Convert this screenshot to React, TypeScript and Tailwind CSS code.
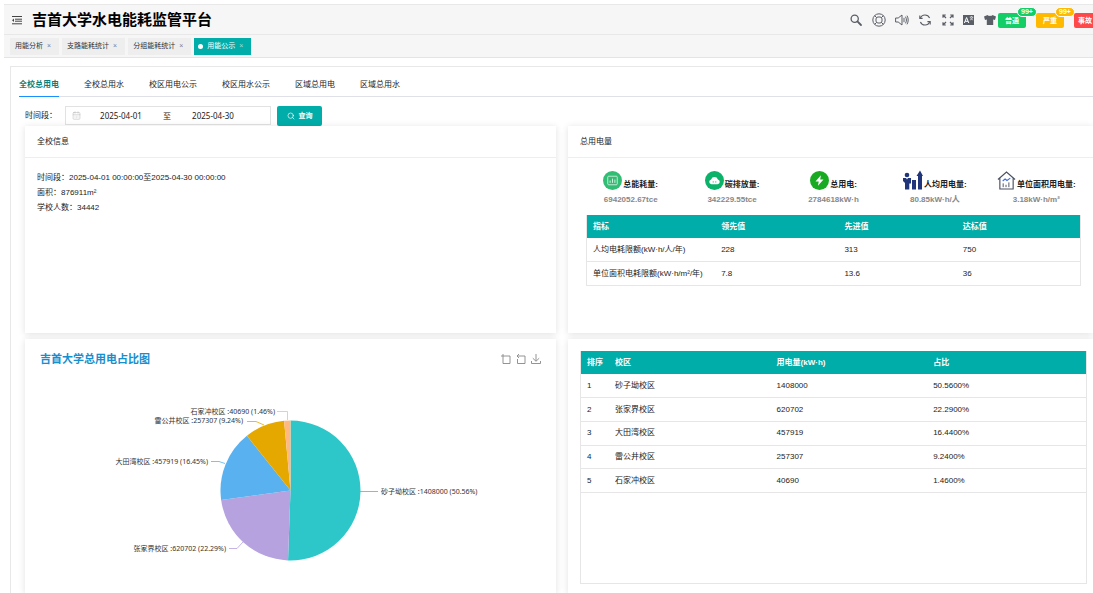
import React from "react";
import { Search, CalendarDays } from "lucide-react";

const openTabs = [
  { name: "用能分析", active: false },
  { name: "支路能耗统计", active: false },
  { name: "分组能耗统计", active: false },
  { name: "用能公示", active: true },
];

const sections = ["全校总用电", "全校总用水", "校区用电公示", "校区用水公示", "区域总用电", "区域总用水"];

const alerts = [
  { name: "普通", count: "99+", box: "bg-[#13ce66]", align: "text-center" },
  { name: "严重", count: "99+", box: "bg-[#ffba00]", align: "text-center" },
  { name: "事故", count: "", box: "bg-[#ff4949]", align: "pl-1 text-left" },
];

const quotas = [
  ["人均电耗限额(kW·h/人/年)", "228", "313", "750"],
  ["单位面积电耗限额(kW·h/m²/年)", "7.8", "13.6", "36"],
];

const campuses = [
  ["1", "砂子坳校区", "1408000", "50.5600%"],
  ["2", "张家界校区", "620702", "22.2900%"],
  ["3", "大田湾校区", "457919", "16.4400%"],
  ["4", "雷公井校区", "257307", "9.2400%"],
  ["5", "石家冲校区", "40690", "1.4600%"],
];

const CX = 265.5;
const CY = 115.5;
const R = 70;

const slices = [
  { share: 50.56, color: "#2ec7c9", label: "砂子坳校区 :1408000 (50.56%)", line: "335,116.5 353,116.5", x: 356, y: 119, anchor: "start" as const },
  { share: 22.29, color: "#b6a2de", label: "张家界校区 :620702 (22.29%)", line: "218,167 212,173.5 204,173.5", x: 201, y: 176, anchor: "end" as const },
  { share: 16.45, color: "#5ab1ef", label: "大田湾校区 :457919 (16.45%)", line: "200,88.5 194,86.5 186,86.5", x: 183, y: 89, anchor: "end" as const },
  { share: 9.24, color: "#e5a800", label: "雷公井校区 :257307 (9.24%)", line: "239,50 231,46.5 222,46.5", x: 218, y: 48, anchor: "end" as const },
  { share: 1.46, color: "#ffb980", label: "石家冲校区 :40690 (1.46%)", line: "262.5,45 262.5,36.5 252,36.5", x: 250, y: 39, anchor: "end" as const },
];

function slicePath(start: number, share: number) {
  const a = (start / 100) * Math.PI * 2;
  const b = ((start + share) / 100) * Math.PI * 2;
  const large = share > 50 ? 1 : 0;
  return `M${CX},${CY} L${CX + R * Math.sin(a)},${CY - R * Math.cos(a)} A${R},${R} 0 ${large} 1 ${CX + R * Math.sin(b)},${CY - R * Math.cos(b)} Z`;
}

function PieChart() {
  let total = 0;
  return (
    <svg viewBox="0 0 531 215" className="block w-full" role="img" aria-label="吉首大学总用电占比图">
      {slices.map((s) => {
        const d = slicePath(total, s.share);
        total += s.share;
        return (
          <g key={s.label}>
            <path d={d} fill={s.color} />
            <polyline points={s.line} fill="none" stroke={s.color} strokeWidth="0.8" />
            <text x={s.x} y={s.y} textAnchor={s.anchor} fill="#333" className="font-['Noto_Sans','Noto_Sans_CJK_SC',sans-serif] text-[7px]">
              {s.label}
            </text>
          </g>
        );
      })}
    </svg>
  );
}

function IconButton({ label, children }: { label: string; children: React.ReactNode }) {
  return (
    <button type="button" aria-label={label} className="flex size-[14px] items-center justify-center text-[#5a5e66]">
      {children}
    </button>
  );
}

function Header() {
  return (
    <header className="flex h-[31px] items-center border-y border-[#e8e8e8] pl-2">
      <button type="button" aria-label="菜单" className="text-[#444]">
        <svg viewBox="0 0 10 10" className="size-[10px]" fill="none" stroke="currentColor" strokeWidth="1">
          <path d="M0 1.500h10M3 4.200h7M3 6.200h7M0 8.800h10" />
          <path d="M2 3.500v3.400L0 5.200z" fill="currentColor" stroke="none" />
        </svg>
      </button>
      <h1 className="ml-[10px] text-[15px] leading-5 font-bold whitespace-nowrap text-black">吉首大学水电能耗监管平台</h1>
      <div className="ml-auto flex shrink-0 items-center gap-[9px]">
        <IconButton label="搜索">
          <svg viewBox="0 0 14 14" className="size-[14px]" fill="none" stroke="currentColor">
            <circle cx="5.7" cy="5.7" r="3.600" strokeWidth="1.300" />
            <path d="M8.400 8.400 12 12" strokeWidth="1.800" strokeLinecap="round" />
          </svg>
        </IconButton>
        <IconButton label="帮助">
          <svg viewBox="0 0 14 14" className="size-[14px]" fill="none" stroke="currentColor" strokeWidth="1">
            <circle cx="7" cy="7" r="6.200" />
            <rect x="4" y="4" width="6" height="6" rx="2" />
            <path d="M2.600 2.600 4.600 4.600M11.400 2.600 9.400 4.600M2.600 11.400 4.600 9.400M11.400 11.400 9.400 9.400" />
          </svg>
        </IconButton>
        <IconButton label="声音">
          <svg viewBox="0 0 14 14" className="size-[14px]" fill="none" stroke="currentColor" strokeWidth="1" strokeLinejoin="round" strokeLinecap="round">
            <path d="M1 5h2.200L7 2v10L3.200 9H1z" />
            <path d="M9 5.200v3.600M10.700 4c1 1.800 1 4.200 0 6M12.200 3c1.400 2.400 1.400 5.600 0 8" />
          </svg>
        </IconButton>
        <IconButton label="刷新">
          <svg viewBox="0 0 14 14" className="size-[14px]" fill="none" stroke="currentColor" strokeWidth="1.100">
            <path d="M2.300 5.200A5 5 0 0 1 11.600 5M11.700 8.800A5 5 0 0 1 2.400 9" />
            <path d="M1.800 2.600v2.800h2.800M12.200 11.400V8.600H9.400" />
          </svg>
        </IconButton>
        <div className="flex items-center gap-[7px]">
          <IconButton label="全屏">
            <svg viewBox="0 0 14 14" className="size-[14px]" fill="none" stroke="currentColor" strokeWidth="1.200">
              <path d="M2 4.800V2h2.800M9.200 2H12v2.800M12 9.200V12H9.200M4.800 12H2V9.200M2 2l3 3M12 2 9 5M12 12 9 9M2 12l3-3" />
            </svg>
          </IconButton>
          <IconButton label="语言">
            <svg viewBox="0 0 14 14" className="size-[14px]">
              <rect x="1" y="2" width="11" height="10" fill="currentColor" />
              <path d="M2.400 10 4.600 4.500 6.800 10M3.200 8.300h2.800" fill="none" stroke="#fff" strokeWidth="1" />
              <path d="M7.800 4h3.400M9.500 3v1M8 7c1.500-.6 2.600-1.600 2.800-3M8.300 4.300c.4 1.200 1.400 2.200 2.800 2.700" fill="none" stroke="#fff" strokeWidth="0.600" />
            </svg>
          </IconButton>
          <IconButton label="主题">
            <svg viewBox="0 0 14 14" className="size-[14px]" fill="currentColor">
              <path d="M4.600 2C5.200 3.200 8.800 3.200 9.400 2L13 3.600 12 7l-1.800-.5V12H3.800V6.500L2 7 1 3.600z" />
            </svg>
          </IconButton>
        </div>
      </div>
      <div className="-mr-[9px] ml-px flex shrink-0 items-center gap-[10px]">
        {alerts.map((a) => (
          <button key={a.name} type="button" className={`relative mt-[2px] h-[15px] w-7 rounded-xs text-[7px] leading-[15px] font-bold text-white ${a.box} ${a.align}`}>
            {a.name}
            {a.count && (
              <span className={`absolute -top-[6px] -right-[11px] h-[10px] w-5 rounded-full border border-white text-[7px] leading-2 ${a.box}`}>{a.count}</span>
            )}
          </button>
        ))}
      </div>
    </header>
  );
}

function OpenTabs() {
  return (
    <nav className="flex h-[23px] items-center gap-[3px] border-b border-[#e4e4e4] pl-[6px] text-[7px]">
      {openTabs.map((t) => (
        <a
          key={t.name}
          href="#"
          className={
            t.active
              ? "flex h-[17px] items-center gap-1 bg-[#00ada9] pr-2 pl-1 whitespace-nowrap text-white"
              : "flex h-[17px] items-center gap-1 bg-[#eee] pr-2 pl-[5px] whitespace-nowrap text-[#333]"
          }
        >
          {t.active && <span className="size-[5px] rounded-full bg-white" />}
          {t.name}
          <span className="opacity-60">×</span>
        </a>
      ))}
    </nav>
  );
}

function Filter() {
  return (
    <form className="flex h-[29px] items-center pt-2 pl-[14px]" onSubmit={(e) => e.preventDefault()}>
      <label htmlFor="start" className="w-10 whitespace-nowrap">
        时间段：
      </label>
      <div className="flex h-[19px] w-[206px] items-center border border-[#e2e2e2] bg-white font-['Noto_Sans','Noto_Sans_CJK_SC',sans-serif]">
        <CalendarDays className="ml-[6px] size-[9px] text-[#bbb]" strokeWidth={1.5} />
        <input id="start" defaultValue="2025-04-01" className="ml-[10px] w-[60px] text-center" />
        <span className="ml-3">至</span>
        <input aria-label="结束日期" defaultValue="2025-04-30" className="ml-3 w-[60px] text-center" />
      </div>
      <button type="submit" className="ml-[6px] flex h-5 w-[45px] items-center justify-center gap-1 rounded-xs bg-[#00ada9] text-[7px] font-bold text-white">
        <Search className="size-2" strokeWidth={2} />
        查询
      </button>
    </form>
  );
}

const card = "bg-white shadow-[0_1px_7px_rgba(0,0,0,0.12)]";

function Stat({ icon, label, value }: { icon: React.ReactNode; label: string; value: string }) {
  return (
    <div className="flex flex-col items-center font-bold whitespace-nowrap">
      <div className="flex h-5 items-end gap-px">
        {icon}
        <span className="leading-[10px] text-[#222]">{label}:</span>
      </div>
      <div className="mt-1 leading-[12px] text-[#888]">{value}</div>
    </div>
  );
}

function Stats() {
  return (
    <div className="grid grid-cols-5 pr-[6px] pl-3">
      <Stat
        label="总能耗量"
        value="6942052.67tce"
        icon={
          <svg viewBox="0 0 20 20" className="size-[19px]">
            <circle cx="10" cy="10" r="10" fill="#33bd74" />
            <rect x="5" y="5.500" width="10" height="9" rx="1" fill="none" stroke="#d5f5e2" strokeWidth="0.900" />
            <path d="M7.500 12.500V10M10 12.500V8M12.500 12.500V9" stroke="#d5f5e2" strokeWidth="1" />
          </svg>
        }
      />
      <Stat
        label="碳排放量"
        value="342229.55tce"
        icon={
          <svg viewBox="0 0 20 20" className="size-[19px]">
            <circle cx="10" cy="10" r="10" fill="#0cb26a" />
            <path d="M6.800 14a2.600 2.600 0 0 1-.4-5.100 3.800 3.800 0 0 1 7.200 0 2.600 2.600 0 0 1-.4 5.100z" fill="#fff" />
            <path d="M8 11.500h1.500M10.500 11.500H12" stroke="#0cb26a" strokeWidth="0.800" />
          </svg>
        }
      />
      <Stat
        label="总用电"
        value="2784618kW·h"
        icon={
          <svg viewBox="0 0 20 20" className="size-[19px]">
            <circle cx="10" cy="10" r="10" fill="#18ab22" />
            <path d="M11.500 4.500 5.800 11h3.400l-.8 4.500L14.200 9h-3.500z" fill="#fff" />
          </svg>
        }
      />
      <Stat
        label="人均用电量"
        value="80.85kW·h/人"
        icon={
          <svg viewBox="0 0 20 20" className="size-5" fill="#20357a">
            <circle cx="4" cy="5" r="2.300" />
            <path d="M0 8h3l1 1.500L5 8h3v5.500H6.300v6H2V13L0 11z" />
            <path d="M9 10h4v9.500H9zM15 6h-1.500L17 .5 20 6h-1v13.500h-4z" />
          </svg>
        }
      />
      <Stat
        label="单位面积用电量"
        value="3.18kW·h/m²"
        icon={
          <svg viewBox="0 0 20 20" className="size-[19px]" fill="none" stroke="#4a5060" strokeWidth="1.200">
            <path d="M1 9 10 1l9 8M3 7.500V19h14V7.500" />
            <path d="M6.500 17v-4M9.500 17v-2.500M12.500 17v-5" strokeWidth="1" />
            <path d="M6 10.500 8.500 8.500l2 1.500L14 7.500" stroke="#3b6ee8" />
          </svg>
        }
      />
    </div>
  );
}

function DataTable({ head, rows, widths, size }: { head: string[]; rows: string[][]; widths: string[]; size: string }) {
  return (
    <table className={`w-full table-fixed border-collapse text-left ${size}`}>
      <thead className="bg-[#00ada9] text-white">
        <tr className="h-[23px]">
          {head.map((h, i) => (
            <th key={h} className={`py-0 pr-0 pl-[6px] font-bold ${widths[i]}`}>
              {h}
            </th>
          ))}
        </tr>
      </thead>
      <tbody>
        {rows.map((r) => (
          <tr key={r[0]} className="h-[23px] border-b border-[#e6e6e6]">
            {r.map((c) => (
              <td key={c} className="py-0 pr-0 pl-[6px] whitespace-nowrap">
                {c}
              </td>
            ))}
          </tr>
        ))}
      </tbody>
    </table>
  );
}

export default function App() {
  return (
    <div className="flex h-screen flex-col overflow-hidden bg-white pt-1 pl-1 font-['Liberation_Sans','Noto_Sans_CJK_SC',sans-serif] text-[8px] leading-[12px] text-[#222]">
      <div className="bg-[#f6f6f6]">
        <Header />
        <OpenTabs />
      </div>
      <main className="mt-2 ml-[6px] flex min-h-0 grow flex-col border-t border-l border-[#e8e8e8]">
        <nav className="ml-2 flex h-[30px] gap-[25px] border-b border-[#e0e0e8] pt-3">
          {sections.map((s, i) => (
            <a
              key={s}
              href="#"
              className={i === 0 ? "-mb-px border-b border-[#1890ff] font-bold whitespace-nowrap text-[#0b7f7c]" : "whitespace-nowrap"}
            >
              {s}
            </a>
          ))}
        </nav>
        <Filter />
        <div className="ml-[14px] grid grow grid-cols-[531fr_525fr] grid-rows-[207px_1fr] gap-x-3 gap-y-[6px]">
          <section className={card}>
            <h2 className="flex h-8 items-center border-b border-[#eee] pl-3">全校信息</h2>
            <div className="pt-3 pl-3 leading-[15px]">
              <p>时间段：2025-04-01 00:00:00至2025-04-30 00:00:00</p>
              <p>面积：876911m²</p>
              <p>学校人数：34442</p>
            </div>
          </section>
          <section className={card}>
            <h2 className="flex h-8 items-center border-b border-[#eee] pl-3">总用电量</h2>
            <div className="pt-3">
              <Stats />
              <div className="mt-[9px] mr-3 ml-[18px] border-x border-[#e6e6e6]">
                <DataTable
                  size="h-[71px]"
                  head={["指标", "领先值", "先进值", "达标值"]}
                  rows={quotas}
                  widths={["w-[26%]", "w-[25%]", "w-[24%]", "w-[25%]"]}
                />
              </div>
            </div>
          </section>
          <section className={card}>
            <div className="flex h-9 items-center justify-between pt-1 pr-[15px] pl-[15px]">
              <h2 className="text-[11px] font-bold text-[#168fcf]">吉首大学总用电占比图</h2>
              <div className="flex gap-[5px] text-[#888]">
                <button type="button" aria-label="区域缩放">
                  <svg viewBox="0 0 10 10" className="size-[10px]" fill="none" stroke="currentColor" strokeWidth="0.900">
                    <path d="M0 2h9v7.500H2V0" />
                  </svg>
                </button>
                <button type="button" aria-label="缩放还原">
                  <svg viewBox="0 0 10 10" className="size-[10px]" fill="none" stroke="currentColor" strokeWidth="0.900">
                    <path d="M3 0 1 2l2 2M1 2h8v7.500H1.500V5" />
                  </svg>
                </button>
                <button type="button" aria-label="保存为图片">
                  <svg viewBox="0 0 10 10" className="size-[10px]" fill="none" stroke="currentColor" strokeWidth="0.900">
                    <path d="M5 0v7M1.800 4.200 5 7.300l3.200-3.100M.5 7v2.500h9V7" />
                  </svg>
                </button>
              </div>
            </div>
            <PieChart />
          </section>
          <section className={card}>
            <div className="mt-3 mr-[6px] ml-3 h-[233px] border border-t-0 border-[#e6e6e6]">
              <DataTable
                size="h-[142px]"
                head={["排序", "校区", "用电量(kW·h)", "占比"]}
                rows={campuses}
                widths={["w-7", "w-[32%]", "w-[31%]", "w-auto"]}
              />
            </div>
          </section>
        </div>
      </main>
    </div>
  );
}
